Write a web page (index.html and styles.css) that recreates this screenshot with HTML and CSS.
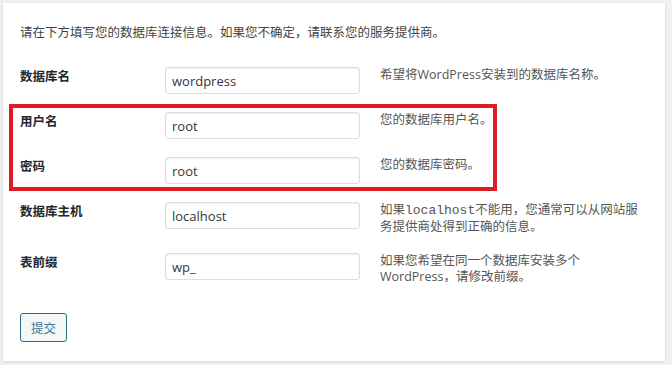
FILE: index.html
```html
<!DOCTYPE html>
<html lang="zh-CN">
<head>
    <meta charset="UTF-8">
    <title>WordPress › 安装配置文件</title>
    <link rel="stylesheet" href="styles.css">
</head>
<body>
    <div class="card">
        <p class="intro">请在下方填写您的数据库连接信息。如果您不确定，请联系您的服务提供商。</p>

        <form class="setup">
            <div class="row">
                <label for="dbname">数据库名</label>
                <input id="dbname" type="text" value="wordpress">
                <p class="desc">希望将WordPress安装到的数据库名称。</p>
            </div>

            <div class="group">
                <div class="row">
                    <label for="uname">用户名</label>
                    <input id="uname" type="text" value="root">
                    <p class="desc">您的数据库用户名。</p>
                </div>
                <div class="row">
                    <label for="pwd">密码</label>
                    <input id="pwd" type="text" value="root">
                    <p class="desc">您的数据库密码。</p>
                </div>
            </div>

            <div class="row">
                <label for="dbhost">数据库主机</label>
                <input id="dbhost" type="text" value="localhost">
                <p class="desc">如果<code>localhost</code>不能用，您通常可以从网站服务提供商处得到正确的信息。</p>
            </div>

            <div class="row">
                <label for="prefix">表前缀</label>
                <input id="prefix" type="text" value="wp_">
                <p class="desc">如果您希望在同一个数据库安装多个WordPress，请修改前缀。</p>
            </div>

            <button type="submit" class="submit">提交</button>
        </form>
    </div>
</body>
</html>
```

FILE: styles.css
```css
body {
    margin: 0;
    background-color: #f1f1f1;
    font-family: "Open Sans", "Noto Sans CJK SC", sans-serif;
    font-size: 12.5px;
    color: #444;
}
.card {
    margin: 3px 7px 5px 3px;
    padding: 21px 17px 19px 17px;
    background: #fff;
    box-shadow: 0 1px 3px rgba(0, 0, 0, 0.13);
}
.intro {
    margin: 0 0 16px 0;
    line-height: 18px;
}
.setup {
    margin: 0;
}
.row {
    display: grid;
    grid-template-columns: 145px 195px 280px;
    align-items: start;
    padding: 9px 0;
}
.row label {
    font-weight: bold;
    color: #23282d;
    line-height: 20px;
}
.row input {
    box-sizing: border-box;
    width: 195px;
    height: 27px;
    margin: 0;
    padding: 0 6px;
    border: 1px solid #ddd;
    border-radius: 3px;
    box-shadow: inset 0 1px 2px rgba(0, 0, 0, 0.07);
    font-family: "Open Sans", sans-serif;
    font-size: 13px;
    color: #32373c;
}
.desc {
    margin: 0 0 0 20px;
    line-height: 16px;
    color: #555;
}
.desc code {
    font-family: "Liberation Mono", monospace;
    font-size: 13px;
    line-height: 16px;
}
.group {
    position: relative;
}
.group::after {
    content: "";
    position: absolute;
    top: 1px;
    left: -11px;
    width: 480px;
    height: 79px;
    border: 4px solid #e01b24;
    pointer-events: none;
}
.submit {
    margin-top: 19px;
    width: 47px;
    height: 29px;
    padding: 0;
    background: #f5f6f7;
    border: 1px solid #2e6d88;
    border-radius: 3px;
    font-family: "Noto Sans CJK SC", sans-serif;
    font-size: 12.5px;
    color: #3b7aa0;
    cursor: pointer;
}
```
